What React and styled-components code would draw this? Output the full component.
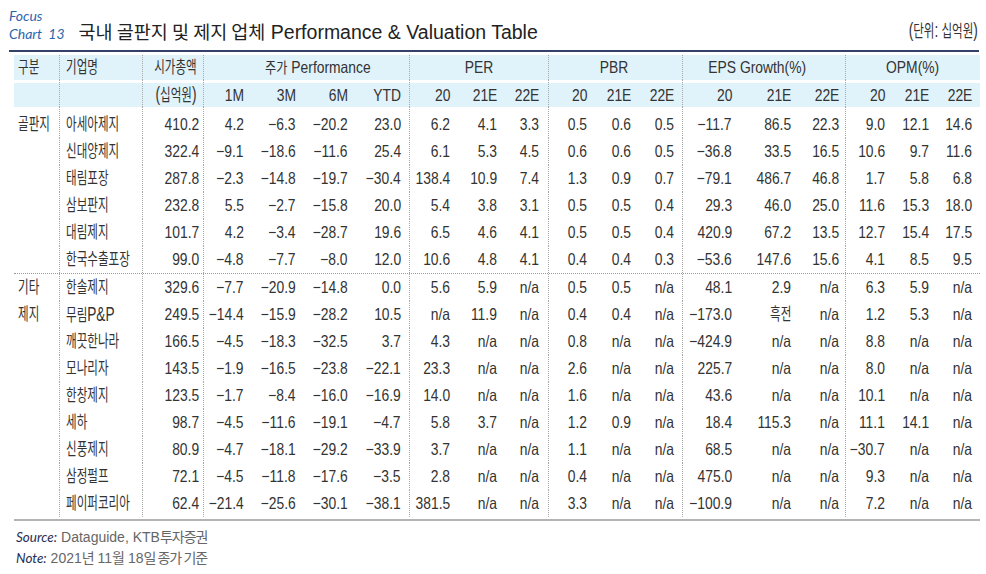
import React from 'react'
import styled, { createGlobalStyle } from 'styled-components'

const GlobalStyle = createGlobalStyle`
  html, body {
    margin: 0;
    padding: 0;
    background: #fff;
  }
  body {
    font-family: 'Liberation Sans', 'Noto Sans CJK KR', sans-serif;
    color: #333;
  }
`

// column widths, table runs from x=14 to x=980
const COLS = [45, 83, 61, 45, 52, 52, 57, 45, 47, 47, 43, 44, 47, 54, 59, 50, 44, 44, 47]
const GRID = COLS.map(w => w + 'px').join(' ')
const SEP = [1, 2, 3, 7, 10, 13, 16]
const PAD = { 6: 8, 9: 9, 12: 8, 15: 6, 18: 8 }
const BAND = '#e0f2fa'
const KO = /[가-힣]/

const groups = [
  {
    label: ['골판지'],
    rows: [
      ['아세아제지', '410.2', '4.2', '-6.3', '-20.2', '23.0', '6.2', '4.1', '3.3', '0.5', '0.6', '0.5', '-11.7', '86.5', '22.3', '9.0', '12.1', '14.6'],
      ['신대양제지', '322.4', '-9.1', '-18.6', '-11.6', '25.4', '6.1', '5.3', '4.5', '0.6', '0.6', '0.5', '-36.8', '33.5', '16.5', '10.6', '9.7', '11.6'],
      ['태림포장', '287.8', '-2.3', '-14.8', '-19.7', '-30.4', '138.4', '10.9', '7.4', '1.3', '0.9', '0.7', '-79.1', '486.7', '46.8', '1.7', '5.8', '6.8'],
      ['삼보판지', '232.8', '5.5', '-2.7', '-15.8', '20.0', '5.4', '3.8', '3.1', '0.5', '0.5', '0.4', '29.3', '46.0', '25.0', '11.6', '15.3', '18.0'],
      ['대림제지', '101.7', '4.2', '-3.4', '-28.7', '19.6', '6.5', '4.6', '4.1', '0.5', '0.5', '0.4', '420.9', '67.2', '13.5', '12.7', '15.4', '17.5'],
      ['한국수출포장', '99.0', '-4.8', '-7.7', '-8.0', '12.0', '10.6', '4.8', '4.1', '0.4', '0.4', '0.3', '-53.6', '147.6', '15.6', '4.1', '8.5', '9.5'],
    ],
  },
  {
    label: ['기타', '제지'],
    rows: [
      ['한솔제지', '329.6', '-7.7', '-20.9', '-14.8', '0.0', '5.6', '5.9', 'n/a', '0.5', '0.5', 'n/a', '48.1', '2.9', 'n/a', '6.3', '5.9', 'n/a'],
      ['무림P&P', '249.5', '-14.4', '-15.9', '-28.2', '10.5', 'n/a', '11.9', 'n/a', '0.4', '0.4', 'n/a', '-173.0', '흑전', 'n/a', '1.2', '5.3', 'n/a'],
      ['깨끗한나라', '166.5', '-4.5', '-18.3', '-32.5', '3.7', '4.3', 'n/a', 'n/a', '0.8', 'n/a', 'n/a', '-424.9', 'n/a', 'n/a', '8.8', 'n/a', 'n/a'],
      ['모나리자', '143.5', '-1.9', '-16.5', '-23.8', '-22.1', '23.3', 'n/a', 'n/a', '2.6', 'n/a', 'n/a', '225.7', 'n/a', 'n/a', '8.0', 'n/a', 'n/a'],
      ['한창제지', '123.5', '-1.7', '-8.4', '-16.0', '-16.9', '14.0', 'n/a', 'n/a', '1.6', 'n/a', 'n/a', '43.6', 'n/a', 'n/a', '10.1', 'n/a', 'n/a'],
      ['세하', '98.7', '-4.5', '-11.6', '-19.1', '-4.7', '5.8', '3.7', 'n/a', '1.2', '0.9', 'n/a', '18.4', '115.3', 'n/a', '11.1', '14.1', 'n/a'],
      ['신풍제지', '80.9', '-4.7', '-18.1', '-29.2', '-33.9', '3.7', 'n/a', 'n/a', '1.1', 'n/a', 'n/a', '68.5', 'n/a', 'n/a', '-30.7', 'n/a', 'n/a'],
      ['삼정펄프', '72.1', '-4.5', '-11.8', '-17.6', '-3.5', '2.8', 'n/a', 'n/a', '0.4', 'n/a', 'n/a', '475.0', 'n/a', 'n/a', '9.3', 'n/a', 'n/a'],
      ['페이퍼코리아', '62.4', '-21.4', '-25.6', '-30.1', '-38.1', '381.5', 'n/a', 'n/a', '3.3', 'n/a', 'n/a', '-100.9', 'n/a', 'n/a', '7.2', 'n/a', 'n/a'],
    ],
  },
]

const subHeads = ['1M', '3M', '6M', 'YTD', '20', '21E', '22E', '20', '21E', '22E', '20', '21E', '22E', '20', '21E', '22E']

// korean strings are squeezed harder; latin runs inside them get bumped back up
function splitLatin(text) {
  return text.split(/([A-Za-z&():]+)/).map((part, i) =>
    /[A-Za-z():]/.test(part) ? <Latin key={i}>{part}</Latin> : part
  )
}

function Text({ align = 'right', children }) {
  const str = typeof children === 'string'
  const ko = str && KO.test(children)
  const origin = align === 'left' ? 'left center' : align === 'center' ? 'center' : 'right center'
  let content = children
  if (str) content = ko ? splitLatin(children) : children.replace('-', '−')
  return (
    <Txt $ko={ko} $origin={origin}>
      {content}
    </Txt>
  )
}

function Cell({ col, span, align = 'right', pl = 0, pr, children }) {
  return (
    <Box
      $align={align}
      $sep={SEP.includes(col)}
      $span={span}
      $pl={pl}
      $pr={pr ?? PAD[col + (span || 1) - 1] ?? 4}
    >
      {children !== undefined && children !== '' && <Text align={align}>{children}</Text>}
    </Box>
  )
}

export default function App() {
  return (
    <Page>
      <GlobalStyle />
      <Header>
        <Tag>
          <span>Focus</span>
          <span>Chart 13</span>
        </Tag>
        <Title>
          <TitleKo>국내 골판지 및 제지 업체</TitleKo> Performance &amp; Valuation Table
        </Title>
        <Unit>
          <Text>(단위: 십억원)</Text>
        </Unit>
      </Header>

      <Table>
        <HeadRow>
          <Cell col={0} align='left' pl={4}>구분</Cell>
          <Cell col={1} align='left' pl={6}>기업명</Cell>
          <Cell col={2} pr={6}>시가총액</Cell>
          <Cell col={3} span={4} align='center' pl={30}>
            <><Inner>주가</Inner> Performance</>
          </Cell>
          <Cell col={7} span={3} align='center' pl={8}>PER</Cell>
          <Cell col={10} span={3} align='center' pl={4}>PBR</Cell>
          <Cell col={13} span={3} align='center' pr={14}>EPS Growth(%)</Cell>
          <Cell col={16} span={3} align='center' pr={0}>OPM(%)</Cell>
        </HeadRow>
        <HeadRow $gap>
          <Cell col={0} />
          <Cell col={1} />
          <Cell col={2} pr={6}>(십억원)</Cell>
          {subHeads.map((h, i) => (
            <Cell key={i} col={i + 3}>{h}</Cell>
          ))}
        </HeadRow>

        {groups.map((g, gi) =>
          g.rows.map((r, ri) => (
            <BodyRow key={gi + '-' + ri} $first={gi === 0 && ri === 0} $divider={gi > 0 && ri === 0}>
              <Cell col={0} align='left' pl={4}>{g.label[ri] || ''}</Cell>
              <Cell col={1} align='left' pl={6}>{r[0]}</Cell>
              {r.slice(1).map((v, i) => (
                <Cell key={i} col={i + 2}>{v}</Cell>
              ))}
            </BodyRow>
          ))
        )}
      </Table>

      <Notes>
        <Note>
          <NoteLabel>Source:</NoteLabel> Dataguide, KTB<NoteKo>투자증권</NoteKo>
        </Note>
        <Note>
          <NoteLabel>Note:</NoteLabel> 2021<NoteKo>년</NoteKo> 11<NoteKo>월</NoteKo> 18<NoteKo>일 종가 기준</NoteKo>
        </Note>
      </Notes>
    </Page>
  )
}

const Page = styled.div`
  width: 986px;
  height: 574px;
  box-sizing: border-box;
  padding: 0 7px 0 9px;
  overflow: hidden;
`

const Header = styled.div`
  display: flex;
  align-items: flex-end;
  height: 52px;
  box-sizing: border-box;
  padding-bottom: 6px;
  border-bottom: 2px solid #34426a;
`

const Tag = styled.div`
  display: flex;
  flex-direction: column;
  padding-bottom: 1px;
  font-family: Lato, 'Open Sans', sans-serif;
  font-style: italic;
  font-size: 14px;
  line-height: 18px;
  color: #2a66ad;
  word-spacing: 3px;
`

const Title = styled.div`
  margin-left: 14px;
  font-size: 19.5px;
  line-height: 24px;
  color: #222;
  white-space: nowrap;
`

const TitleKo = styled.span`
  font-family: 'Noto Sans CJK KR', sans-serif;
  font-size: 18.5px;
`

const Unit = styled.div`
  margin-left: auto;
  padding-right: 1px;
  line-height: 24px;
  color: #333;
`

const Table = styled.div`
  margin: 3px 0 0 5px;
  width: 966px;
  padding-bottom: 2px;
  border-bottom: 2px solid #b4b4b4;
  color: #333;
`

const HeadRow = styled.div`
  display: grid;
  grid-template-columns: ${GRID};
  height: ${p => (p.$gap ? 27 : 25)}px;
  background: ${p => (p.$gap ? `linear-gradient(to bottom, #fff 3px, ${BAND} 3px)` : BAND)};

  & > div {
    padding-top: ${p => (p.$gap ? 3 : 0)}px;
  }
`

const BodyRow = styled.div`
  display: grid;
  grid-template-columns: ${GRID};
  height: ${p => (p.$first ? 31 : 27)}px;
  border-top: ${p => (p.$divider ? '1px dotted #9a9a9a' : 'none')};

  & > div {
    padding-top: ${p => (p.$first ? 4 : 0)}px;
  }
`

const Box = styled.div`
  display: flex;
  align-items: center;
  justify-content: ${p => (p.$align === 'left' ? 'flex-start' : p.$align === 'center' ? 'center' : 'flex-end')};
  grid-column: ${p => (p.$span ? `span ${p.$span}` : 'auto')};
  padding-left: ${p => p.$pl}px;
  padding-right: ${p => p.$pr}px;
  border-left: ${p => (p.$sep ? '1px dotted #a8a8a8' : 'none')};
  white-space: nowrap;
  min-width: 0;
`

const Txt = styled.span`
  display: inline-block;
  font-family: 'Liberation Sans', 'Noto Sans CJK KR', sans-serif;
  font-size: 16.5px;
  line-height: 1;
  transform: scaleX(${p => (p.$ko ? 0.7 : 0.84)});
  transform-origin: ${p => p.$origin};
`

const Latin = styled.span`
  font-size: 1.18em;
`

const Inner = styled.span`
  font-size: 14.5px;
`

const Notes = styled.div`
  margin-top: 5px;
  padding-left: 7px;
  font-size: 14px;
  line-height: 20px;
  color: #666;
`

const Note = styled.div`
  white-space: nowrap;
`

const NoteLabel = styled.span`
  font-family: Lato, 'Open Sans', sans-serif;
  font-style: italic;
  font-size: 13.5px;
  color: #1f2f55;
`

const NoteKo = styled.span`
  font-family: 'Noto Sans CJK KR', sans-serif;
  font-size: 14px;
  letter-spacing: -1px;
`
